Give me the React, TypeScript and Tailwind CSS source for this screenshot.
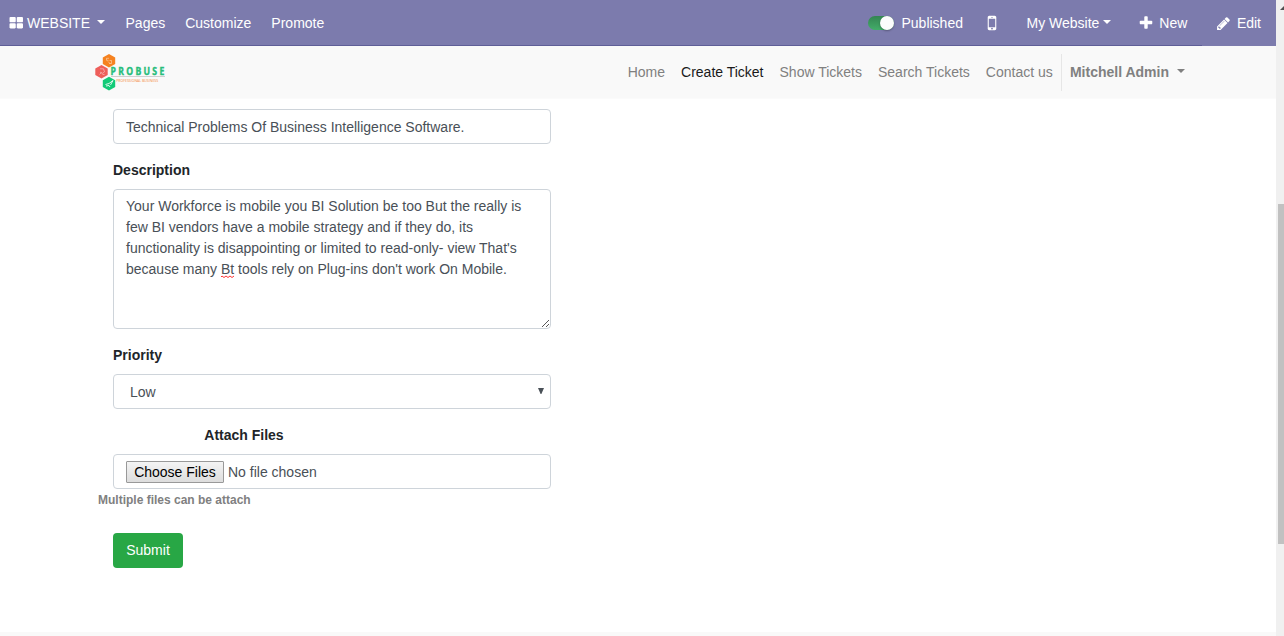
import type { ReactNode } from 'react';

const ICONS = {
  grid: 'M832 1024v384q0 52-38 90t-90 38h-512q-52 0-90-38t-38-90v-384q0-52 38-90t90-38h512q52 0 90 38t38 90zm0-768v384q0 52-38 90t-90 38h-512q-52 0-90-38t-38-90v-384q0-52 38-90t90-38h512q52 0 90 38t38 90zm896 768v384q0 52-38 90t-90 38h-512q-52 0-90-38t-38-90v-384q0-52 38-90t90-38h512q52 0 90 38t38 90zm0-768v384q0 52-38 90t-90 38h-512q-52 0-90-38t-38-90v-384q0-52 38-90t90-38h512q52 0 90 38t38 90z',
  mobile:
    'M976 1408q0-33-23.5-56.5t-56.5-23.5-56.5 23.5-23.5 56.5 23.5 56.5 56.5 23.5 56.5-23.5 23.5-56.5zm208-160v-704q0-13-9.5-22.5t-22.5-9.5h-512q-13 0-22.5 9.5t-9.5 22.5v704q0 13 9.5 22.5t22.5 9.5h512q13 0 22.5-9.5t9.5-22.5zm-192-848q0-16-16-16h-160q-16 0-16 16t16 16h160q16 0 16-16zm288-16v1024q0 52-38 90t-90 38h-512q-52 0-90-38t-38-90v-1024q0-52 38-90t90-38h512q52 0 90 38t38 90z',
  plus: 'M1600 736v192q0 40-28 68t-68 28h-416v416q0 40-28 68t-68 28h-192q-40 0-68-28t-28-68v-416h-416q-40 0-68-28t-28-68v-192q0-40 28-68t68-28h416v-416q0-40 28-68t68-28h192q40 0 68 28t28 68v416h416q40 0 68 28t28 68z',
  pencil:
    'M491 1536l91-91-235-235-91 91v107h128v128h107zm523-928q0-22-22-22-10 0-17 7l-542 542q-7 7-7 17 0 22 22 22 10 0 17-7l542-542q7-7 7-17zm-54-192l416 416-832 832h-416v-416zm683 96q0 53-37 90l-166 166-416-416 166-165q36-38 90-38 53 0 91 38l235 234q37 39 37 91z',
};

function Icon({ name, className }: { name: keyof typeof ICONS; className: string }) {
  return (
    <svg viewBox="0 0 1792 1792" fill="currentColor" className={className} aria-hidden="true">
      <path d={ICONS[name]} />
    </svg>
  );
}

function Caret({ className = '' }: { className?: string }) {
  return (
    <svg viewBox="0 0 8 4" fill="currentColor" className={`-mt-0.5 h-1 w-2 shrink-0 ${className}`} aria-hidden="true">
      <path d="M0 0h8L4 4z" />
    </svg>
  );
}

function Logo() {
  return (
    <svg viewBox="0 0 72 40" className="h-10 w-[72px] overflow-visible" role="img" aria-label="Probuse">
      <path d="M14 2l6.200 3.400v6.600L14 15.500 7.800 12V5.400z" fill="#f58220" />
      <path d="M6.500 13l6.200 3.400v6.700l-6.200 3.400-6.200-3.400v-6.700z" fill="#ee5f5b" />
      <path d="M14 24.800l6.200 3.400v6.700l-6.200 3.500-6.200-3.500v-6.700z" fill="#12cb78" />
      <g fill="none" stroke="#fff" strokeOpacity=".45" strokeWidth=".9">
        <path d="M14 6.300h-2.500v2h2M14.500 8.500h2v3h-2.500M13 9.500l2 2" />
        <path d="M5 16.800h3.500l1 3-2.200 1.700-2.300-1.500M4.500 22.500l2-2M7.500 22.500h2" />
      </g>
      <path d="M10.500 32.500l3.500-1 4-3-2.500 4.500M11 34l3-.500 1 1.500" fill="none" stroke="#fff" strokeOpacity=".85" strokeWidth="1" />
      <g transform="translate(15.500 22.700) scale(.84 1)">
        <text textLength="64" lengthAdjust="spacing" fill="#27bd7b" stroke="#27bd7b" strokeWidth=".4" className="font-['Open_Sans',sans-serif] text-[10.300px] font-bold">
          PROBUSE
        </text>
      </g>
      <path d="M16 24.500h54" stroke="#c4c4c4" strokeWidth=".8" />
      <text x="21.200" y="29.500" textLength="42" lengthAdjust="spacingAndGlyphs" fill="#f58a3c" className="font-['Open_Sans',sans-serif] text-[4px]">
        PROFESSIONAL BUSINESS
      </text>
    </svg>
  );
}

function Label({ children, className = '' }: { children: ReactNode; className?: string }) {
  return <div className={`mb-2 mt-4 font-bold leading-[21px] text-[#212529] ${className}`}>{children}</div>;
}

const box = 'w-[438px] rounded-[4px] border border-[#ced4da] bg-white text-[#495057]';

function TopBar() {
  return (
    <header className="flex h-[46px] items-center bg-[#7c7bad] pl-[9px] pr-[15px] text-white [background-image:linear-gradient(#5f5e97,#5f5e97)] [background-position:0_45px] [background-repeat:no-repeat] [background-size:1202px_1px]">
      <div className="flex items-center gap-5">
        <a className="flex items-center">
          <Icon name="grid" className="mr-[3.500px] size-[14.500px]" />
          WEBSITE
          <Caret className="ml-[7px] mr-[.5px]" />
        </a>
        <a>Pages</a>
        <a>Customize</a>
        <a>Promote</a>
      </div>
      <div className="ml-auto flex items-center">
        <span className="mr-[7px] flex h-[14px] w-[26px] items-center justify-end rounded-full bg-linear-to-b from-[#348552] to-[#43ad69]">
          <span className="size-[14px] rounded-full bg-[#fcfcfc] shadow-[0_1px_2px_rgba(0,0,0,0.3)]" />
        </span>
        <span>Published</span>
        <Icon name="mobile" className="ml-[19px] size-5" />
        <span className="ml-[24.500px]">My Website</span>
        <Caret className="ml-1" />
        <Icon name="plus" className="ml-[27px] size-4" />
        <span className="ml-[5px]">New</span>
        <Icon name="pencil" className="ml-[28.500px] size-[15px]" />
        <span className="ml-[6px]">Edit</span>
      </div>
    </header>
  );
}

function SiteNav() {
  return (
    <nav className="flex h-[53px] items-center border-b border-[#fbfbfb] bg-[#f9f9f9] pl-[95px] pr-[91px] text-[#808080]">
      <Logo />
      <div className="ml-auto flex items-center">
        <div className="flex gap-4 pr-[8.200px]">
          <a>Home</a>
          <a className="text-[#1a1a1a]">Create Ticket</a>
          <a>Show Tickets</a>
          <a>Search Tickets</a>
          <a>Contact us</a>
        </div>
        <div className="flex h-[37px] items-center border-l border-[#e6e6e6] pl-2 font-bold">
          Mitchell Admin
          <Caret className="ml-2" />
        </div>
      </div>
    </nav>
  );
}

export default function App() {
  return (
    <div className="flex h-[636px] w-[1284px] overflow-hidden bg-white font-['Liberation_Sans',Arial,sans-serif] text-[14px] leading-[21px]">
      <div className="flex w-[1276px] flex-col">
        <TopBar />
        <SiteNav />
        <main className="flex-1 pl-[113px] pt-[10px]">
          <input
            className={`${box} block h-[35px] px-3`}
            defaultValue="Technical Problems Of Business Intelligence Software."
          />
          <Label>Description</Label>
          <div role="textbox" className={`${box} relative h-[140px] px-3 py-1.5`}>
            Your Workforce is mobile you BI Solution be too But the really is
            <br />
            few BI vendors have a mobile strategy and if they do, its
            <br />
            functionality is disappointing or limited to read-only- view That's
            <br />
            because many{' '}
            <span className="relative">
              Bt
              <svg viewBox="0 0 13 3" className="absolute -bottom-px left-0 h-[3px] w-[13px]" aria-hidden="true">
                <path d="M0 2l1-1 2 1.500 2-1.500 2 1.500 2-1.500 2 1.500 2-1.500" fill="none" stroke="#f00" strokeWidth=".8" />
              </svg>
            </span>{' '}
            tools rely on Plug-ins don't work On Mobile.
            <svg viewBox="0 0 8 8" className="absolute bottom-px right-px size-2" aria-hidden="true">
              <path d="M1 8L8 1M5 8l3-3" fill="none" stroke="#444" strokeWidth=".9" />
            </svg>
          </div>
          <Label>Priority</Label>
          <div role="combobox" className={`${box} flex h-[35px] items-center justify-between pl-4 pr-[6px] pt-px`}>
            Low
            <svg viewBox="0 0 6 6" fill="currentColor" className="-mt-[3px] size-[6px]" aria-hidden="true">
              <path d="M0 0h6L3.400 6h-.800z" />
            </svg>
          </div>
          <Label className="pl-[91.300px]">Attach Files</Label>
          <div className={`${box} flex h-[35px] items-center gap-1 px-3 pt-px`}>
            <button className="h-[22px] w-[98px] rounded-[1px] border border-[#999] bg-linear-to-b from-[#f4f4f4] to-[#dddddd] leading-[20px] text-black">
              Choose Files
            </button>
            <span>No file chosen</span>
          </div>
          <div className="-ml-[15px] mt-0.5 text-[12px] font-bold leading-[18px] text-[#808080]">Multiple files can be attach</div>
          <button className="mt-[24px] block h-[35px] w-[70px] rounded-[4px] bg-[#28a745] text-white">Submit</button>
        </main>
        <footer className="h-1 bg-[#f9f9f9]" />
      </div>
      <div className="flex w-2 flex-col items-end bg-[#f0f0f0]">
        <svg viewBox="0 0 4 4" className="mt-[6px] size-1" aria-hidden="true">
          <path d="M4 0v4H0z" fill="#505050" />
        </svg>
        <div className="mt-[194px] h-[340px] w-[6px] bg-[#c1c1c1]" />
      </div>
    </div>
  );
}
